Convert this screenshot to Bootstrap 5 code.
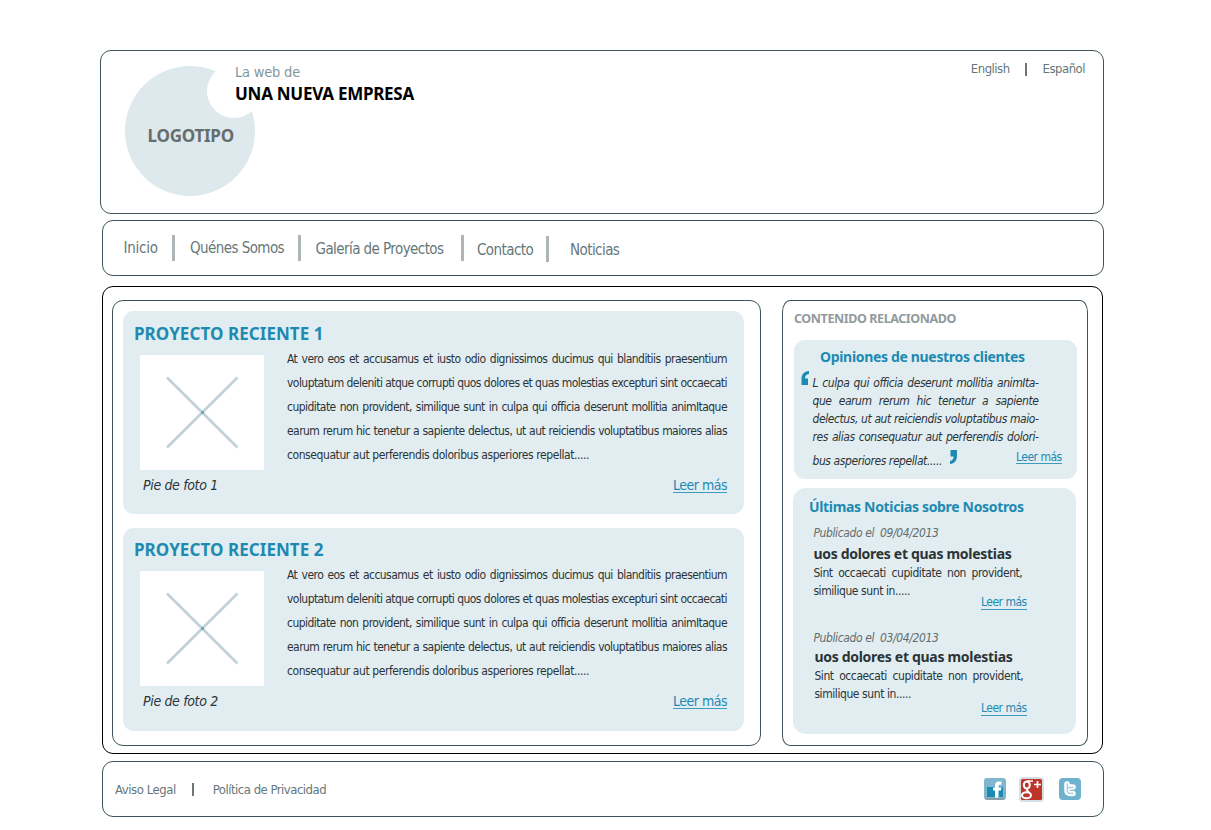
<!DOCTYPE html>
<html lang="es">
<head>
<meta charset="utf-8">
<meta name="viewport" content="width=device-width, initial-scale=1">
<title>Una nueva empresa</title>
<link href="https://cdn.jsdelivr.net/npm/bootstrap@5.3.0/dist/css/bootstrap.min.css" rel="stylesheet">
<style>
  body { font-family: "DejaVu Sans Condensed", "DejaVu Sans", sans-serif; font-stretch: condensed; font-size: 12px; line-height: 20px; color: #2b3436; background: #fff; white-space: nowrap; letter-spacing: -.42px; }
  a { color: inherit; text-decoration: none; }
  h1, h2, h3, p, strong.tt { margin: 0; line-height: 20px; font-family: "Noto Sans", sans-serif; font-weight: 700; font-stretch: normal; }
  p { font-family: inherit; font-weight: 400; font-stretch: inherit; }
  .page { width: 1004px; margin-left: 100px; padding-top: 50px; }
  .frame { border: 1px solid #3f555b; border-radius: 11px; }
  .masthead { height: 164px; }
  .logo { margin: 15px 0 0 24px; flex: none; }
  .logo text { font: 700 17px "Noto Sans", sans-serif; letter-spacing: -.25px; fill: #676d6e; }
  .brand { margin: 11px 0 0 -20px; }
  .brand p { font-size: 14.5px; letter-spacing: -.2px; color: #84979b; }
  .brand h1 { font-size: 17px; letter-spacing: -.27px; color: #000; margin-top: 2px; }
  .langs { font-size: 13px; letter-spacing: -.5px; color: #65777b; margin: 8px 18px 0 auto; height: 20px; }
  .bar { width: 2px; height: 13px; background: #6c7577; }
  .menu { height: 56px; margin: 6px 0 0 2px; padding: 0 20px; font-size: 15px; letter-spacing: -.57px; color: #66777a; }
  .menu a { display: block; padding-top: 17px; }
  .menu a.low { padding-top: 18px; }
  .menu a.lower { padding-top: 19px; }
  .sep { width: 3px; height: 26px; margin-top: 14px; background: #aeb5b8; }
  .shell { height: 468px; margin: 10px 1px 0 2px; border-color: #000; padding: 13px 14px 0 9px; }
  .col-left { width: 649px; height: 446px; padding: 10px; }
  .col-right { width: 306px; height: 446px; padding: 8px 10px; border-radius: 8px 8px 8px 8px / 12px 12px 10px 10px; }
  .tile { background: #e2edf1; border-radius: 11px; }
  .proj { width: 621px; height: 203px; padding: 13px 17px 0 11px; }
  .proj + .proj { margin-top: 14px; padding-top: 12px; }
  .proj h2 { font-size: 17px; letter-spacing: .06px; color: #1d8ab1; }
  .photo { margin: 11px 0 0 6px; display: block; background: #fff; }
  .copy { width: 440px; line-height: 24px; letter-spacing: -.55px; margin-top: 3px; }
  .copy div, .just { text-align: justify; text-align-last: justify; }
  .copy div:last-child { text-align-last: left; letter-spacing: -.42px; }
  .foot { font-size: 14px; padding-left: 9px; margin-top: 5px; }
  .foot em { letter-spacing: -.35px; }
  .more { color: #1d8ab1; letter-spacing: -.5px; border-bottom: 1px solid #3d9cbd; }
  .foot .more { line-height: 17px; height: 16px; margin-top: 2px; }
  .more-s { line-height: 14px; height: 15px; width: 46px; display: block; }
  .col-right h2 { font-size: 12.5px; letter-spacing: -.41px; color: #919a9d; padding-left: 1px; }
  .col-right h3 { font-size: 14px; color: #1d8ab1; letter-spacing: -.33px; }
  .quotes { width: 283px; height: 139px; margin: 11px 0 0 1px; padding: 7px 15px 0 18.5px; }
  .quotes h3 { padding-left: 7.5px; }
  .quote { font-style: italic; line-height: 18px; width: 226px; margin-top: 7px; position: relative; }
  .q-open { position: absolute; left: -11.5px; top: -3px; }
  .news { width: 283px; height: 246px; margin-top: 9px; padding: 9px 0 0 16px; border-radius: 13px; }
  .item { padding-left: 4.4px; }
  .date { font-style: italic; color: #636c6e; letter-spacing: -.39px; white-space: pre; }
  .item strong.tt { display: block; font-size: 14px; letter-spacing: -.3px; }
  .item .body-txt { width: 209px; line-height: 18px; }
  .legal { height: 56px; margin: 7px 0 0 2px; font-size: 13px; color: #65777b; padding: 0 23px 0 12px; letter-spacing: -.45px; }
  .legal > a { padding-top: 1px; }
</style>
</head>
<body>
<div class="page">

  <header class="frame masthead d-flex align-items-start">
    <svg class="logo" width="130" height="130" viewBox="0 0 130 130" role="img" aria-label="Logotipo">
      <circle cx="65" cy="65" r="65" fill="#dde9ed"/>
      <circle cx="109" cy="25" r="27" fill="#fff"/>
      <text x="22.600" y="76">LOGOTIPO</text>
    </svg>
    <div class="brand">
      <p>La web de</p>
      <h1>UNA NUEVA EMPRESA</h1>
    </div>
    <div class="langs d-flex">
      <a href="#">English</a>
      <span class="bar" style="margin:4px 16px 0 15px"></span>
      <a href="#">Español</a>
    </div>
  </header>

  <nav class="frame menu d-flex align-items-start">
    <a href="#" style="width:49px;padding-left:.5px;letter-spacing:-.25px">Inicio</a><span class="sep"></span>
    <a href="#" style="width:123px;padding-left:15px">Quénes Somos</a><span class="sep"></span>
    <a href="#" class="low" style="width:160px;padding-left:14.500px">Galería de Proyectos</a><span class="sep"></span>
    <a href="#" class="lower" style="width:82px;padding-left:13px">Contacto</a><span class="sep" style="margin-top:15px"></span>
    <a href="#" class="lower" style="padding-left:21px">Noticias</a>
  </nav>

  <main class="frame shell d-flex justify-content-between">
    <section class="frame col-left">
      <article class="tile proj">
        <h2>PROYECTO RECIENTE 1</h2>
        <div class="d-flex justify-content-between">
          <svg class="photo" width="124" height="115" viewBox="0 0 124 115"><path d="M27 22.500 97.500 92.500M97.500 22.500 27 92.500" stroke="#c3d2d8" stroke-width="2.800"/><path d="M61 56h3v3h-3z" fill="#6aabc6"/></svg>
          <div class="copy">
            <div>At vero eos et accusamus et iusto odio dignissimos ducimus qui blanditiis praesentium</div>
            <div>voluptatum deleniti atque corrupti quos dolores et quas molestias excepturi sint occaecati</div>
            <div>cupiditate non provident, similique sunt in culpa qui officia deserunt mollitia animItaque</div>
            <div>earum rerum hic tenetur a sapiente delectus, ut aut reiciendis voluptatibus maiores alias</div>
            <div>consequatur aut perferendis doloribus asperiores repellat.....</div>
          </div>
        </div>
        <div class="foot d-flex justify-content-between"><em>Pie de foto 1</em><a href="#" class="more">Leer más</a></div>
      </article>
      <article class="tile proj">
        <h2>PROYECTO RECIENTE 2</h2>
        <div class="d-flex justify-content-between">
          <svg class="photo" width="124" height="115" viewBox="0 0 124 115"><path d="M27 22.500 97.500 92.500M97.500 22.500 27 92.500" stroke="#c3d2d8" stroke-width="2.800"/><path d="M61 56h3v3h-3z" fill="#6aabc6"/></svg>
          <div class="copy">
            <div>At vero eos et accusamus et iusto odio dignissimos ducimus qui blanditiis praesentium</div>
            <div>voluptatum deleniti atque corrupti quos dolores et quas molestias excepturi sint occaecati</div>
            <div>cupiditate non provident, similique sunt in culpa qui officia deserunt mollitia animItaque</div>
            <div>earum rerum hic tenetur a sapiente delectus, ut aut reiciendis voluptatibus maiores alias</div>
            <div>consequatur aut perferendis doloribus asperiores repellat.....</div>
          </div>
        </div>
        <div class="foot d-flex justify-content-between"><em>Pie de foto 2</em><a href="#" class="more">Leer más</a></div>
      </article>
    </section>

    <aside class="frame col-right">
      <h2>CONTENIDO RELACIONADO</h2>
      <section class="tile quotes">
        <h3>Opiniones de nuestros clientes</h3>
        <div class="quote">
          <svg class="q-open" width="9" height="14" viewBox="0 0 9 14"><path d="M8 0C3 .5.500 3.500.500 8v6H7V7.500H4C4 5 5 3.500 8 3Z" fill="#1d8ab1"/></svg>
          <div class="just">L culpa qui officia deserunt mollitia animIta-</div>
          <div class="just">que earum rerum hic tenetur a sapiente</div>
          <div class="just">delectus, ut aut reiciendis voluptatibus maio-</div>
          <div class="just">res alias consequatur aut perferendis dolori-</div>
        </div>
        <div class="d-flex align-items-start">
          <em style="margin-top:5px;width:136px">bus asperiores repellat.....</em>
          <svg width="9" height="14" viewBox="0 0 9 14" style="margin-top:4px"><path d="M1 14C5.500 13.500 8 10.500 8 6V0H1.500V6.500H4.500C4.500 9 3.500 10.500 1 11Z" fill="#1d8ab1"/></svg>
          <a href="#" class="more more-s ms-auto" style="margin-top:4px;height:14px">Leer más</a>
        </div>
      </section>
      <section class="tile news">
        <h3>Últimas Noticias sobre Nosotros</h3>
        <div class="item" style="margin-top:6px">
          <p class="date">Publicado el  09/04/2013</p>
          <strong class="tt" style="margin-top:1px">uos dolores et quas molestias</strong>
          <div class="body-txt"><div class="just">Sint occaecati cupiditate non provident,</div><div>similique sunt in.....</div></div>
          <a href="#" class="more more-s" style="margin:-5px 0 0 167.600px">Leer más</a>
        </div>
        <div class="item" style="margin-top:18px">
          <p class="date">Publicado el  03/04/2013</p>
          <div style="margin-left:1px">
            <strong class="tt" style="margin-top:-1px">uos dolores et quas molestias</strong>
            <div class="body-txt"><div class="just">Sint occaecati cupiditate non provident,</div><div>similique sunt in.....</div></div>
            <a href="#" class="more more-s" style="margin:-2px 0 0 166.600px">Leer más</a>
          </div>
        </div>
      </section>
    </aside>
  </main>

  <footer class="frame legal d-flex align-items-center">
    <a href="#">Aviso Legal</a>
    <span class="bar" style="margin:0 19px 0 16px"></span>
    <a href="#" style="letter-spacing:-.5px">Política de Privacidad</a>
    <div class="d-flex align-items-center ms-auto">
      <svg width="22" height="22" viewBox="0 0 22 22" style="margin-right:13px"><rect width="22" height="22" rx="3" fill="#7fb6cd"/><path d="M3 9h9v10H3z" fill="#1d8ab1"/><path d="M14 9h5v10h-5z" fill="#1d8ab1"/><path d="M2 21h18" stroke="#8b9699" stroke-width="1.500"/><path d="M11 19.500V12.500H9V9.500H11V7.500C11 4.500 12.500 3.500 15 3.500H17.500V6.800H16C14.700 6.800 14.500 7.200 14.500 8.300V9.500H17.500L17 12.500H14.500V19.500Z" fill="#fff"/></svg>
      <svg width="25" height="25" viewBox="0 0 25 25" style="margin-right:15px"><rect width="25" height="25" rx="4" fill="#d3e1e7"/><rect x="2" y="2" width="21" height="21" rx="1.500" fill="#be3429"/><g fill="none" stroke="#fff"><ellipse cx="7.800" cy="8" rx="3" ry="3.600" stroke-width="2"/><path d="M8 4H14" stroke-width="1.500"/><path d="M8.500 11.500C7 13 8.500 14 10 15" stroke-width="2"/><ellipse cx="7.500" cy="18.300" rx="4.500" ry="3" stroke-width="2"/><path d="M18.500 4V11M15 7.500H22" stroke-width="1.700"/></g></svg>
      <svg width="22" height="22" viewBox="0 0 22 22" style="margin-right:-1px"><rect width="22" height="22" rx="4" fill="#6fb2cd"/><path d="M8 6V12C8 14.500 9 15.500 11.500 15.500H14M8 9H14" fill="none" stroke="#fff" stroke-width="5.500" stroke-linecap="round"/><path d="M8.300 6V12C8.300 14.500 9.500 15.500 11.500 15.500H14M8.300 9.500H14" fill="none" stroke="#a9d0df" stroke-width="1.500" stroke-linecap="round"/></svg>
    </div>
  </footer>
</div>
<script src="https://cdn.jsdelivr.net/npm/bootstrap@5.3.0/dist/js/bootstrap.bundle.min.js"></script>
</body>
</html>
